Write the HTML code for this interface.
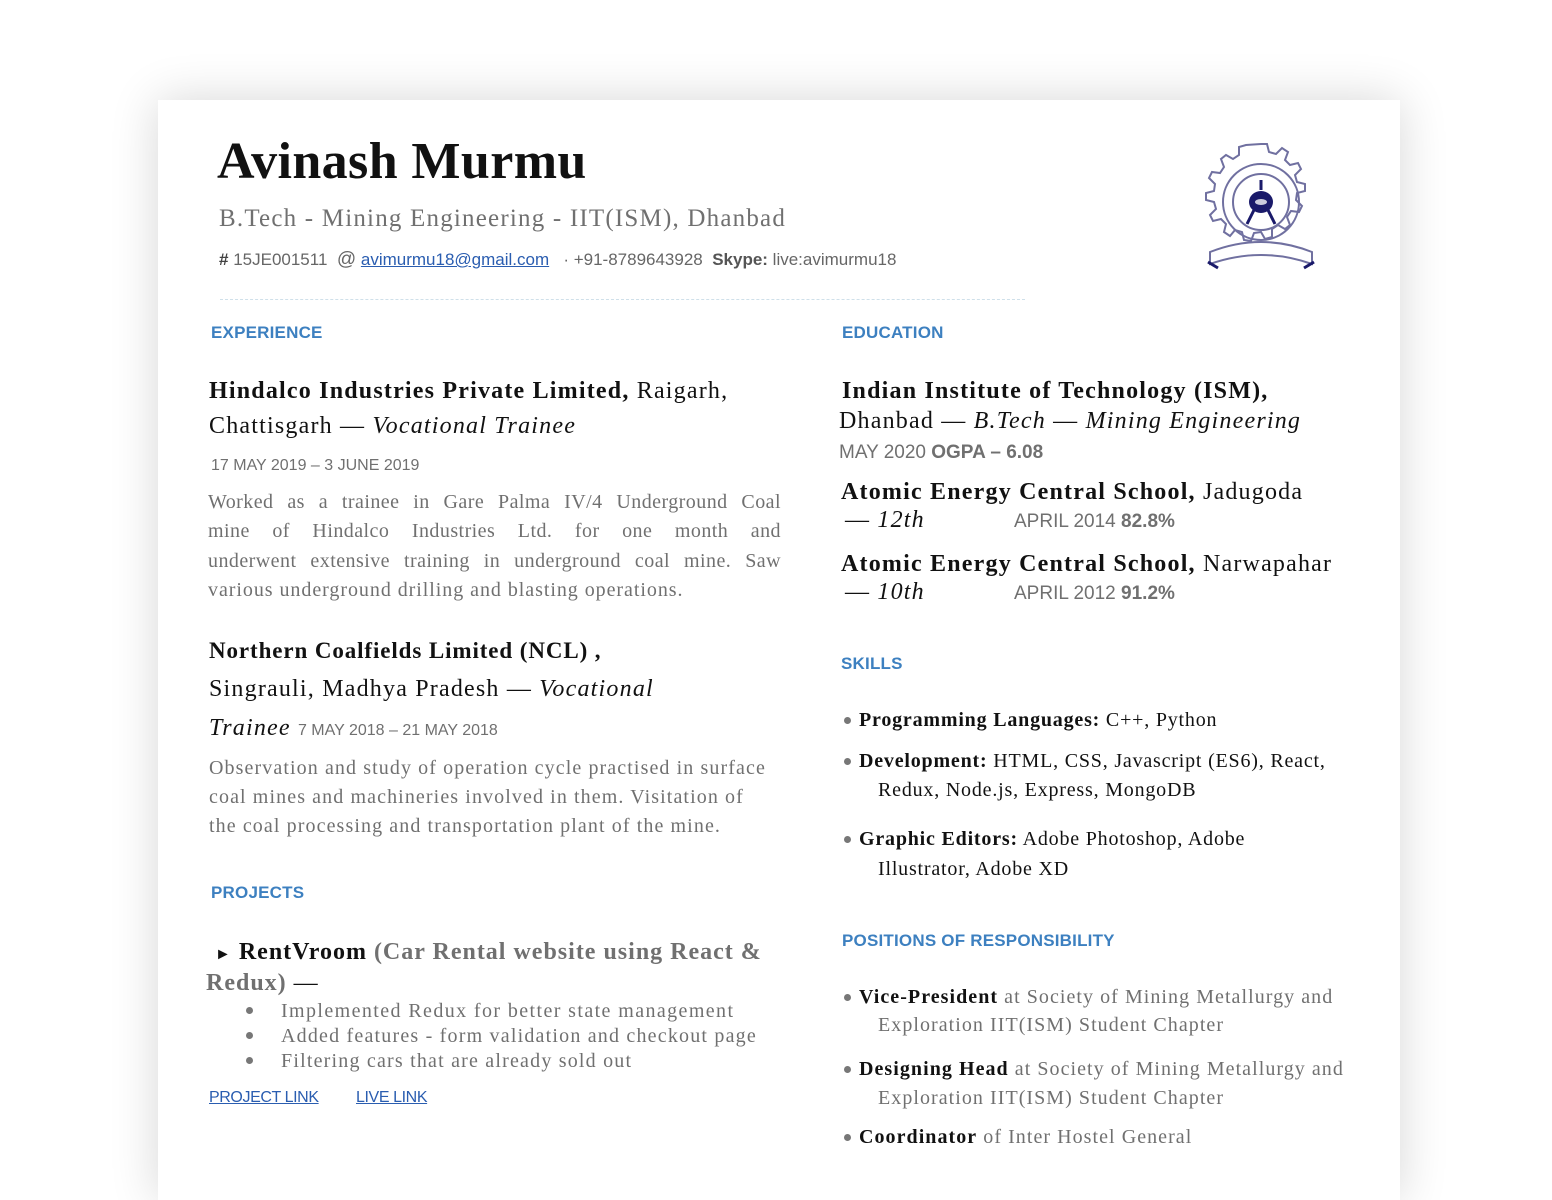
<!DOCTYPE html>
<html><head><meta charset="utf-8">
<style>
html,body{margin:0;padding:0;background:#fff;width:1552px;height:1141px;overflow:hidden;}
.card{position:absolute;left:158px;top:100px;width:1242px;height:1100px;background:#fff;box-shadow:0 0 45px rgba(0,0,0,0.16);}
.t{position:absolute;white-space:nowrap;line-height:1;font-family:"Liberation Serif",serif;}
.s{font-family:"Liberation Sans",sans-serif;}
.h{font-family:"Liberation Sans",sans-serif;color:#3d80c0;font-size:17px;font-weight:bold;letter-spacing:0.2px;}
.b{font-weight:bold;color:#111;}
.g{color:#707070;}
.k{color:#111;}
.p{font-size:20px;color:#707070;letter-spacing:1.1px;}
.j{text-align:justify;text-align-last:justify;width:573px;letter-spacing:0.45px;}
.dot{position:absolute;width:7px;height:7px;border-radius:50%;background:#777;}
.hd{font-size:24px;letter-spacing:1.2px;color:#111;}
.dt{font-family:"Liberation Sans",sans-serif;font-size:16px;color:#707070;letter-spacing:0;}
.r{font-size:20px;letter-spacing:0.8px;}
.q{font-size:20px;letter-spacing:1.05px;}
a{color:#2a5db0;text-decoration:underline;}
</style></head><body>
<div class="card"></div>

<div class="t b" style="left:217px;top:136px;font-size:52px;letter-spacing:0.4px;">Avinash Murmu</div>
<div class="t g" style="left:219px;top:206px;font-size:25px;letter-spacing:1.2px;">B.Tech - Mining Engineering - IIT(ISM), Dhanbad</div>
<div class="t s" style="left:219px;top:250px;font-size:17px;color:#666;"><b style="color:#444">#</b> 15JE001511 &nbsp;<span style="font-size:19px">@</span> <a style="color:#2a5db0">avimurmu18@gmail.com</a> &nbsp; · +91-8789643928 &nbsp;<b style="color:#555">Skype:</b> live:avimurmu18</div>
<div style="position:absolute;left:220px;top:299px;width:805px;border-top:1px dashed #cfe0ea;"></div>

<svg style="position:absolute;left:1200px;top:140px" width="122" height="135" viewBox="0 0 122 135">
<g fill="none" stroke="#7070a0" stroke-width="2">
<path d="M61 4 l6 0 2 8 7 2 6-6 6 4-3 8 5 5 8-2 3 6-6 6 2 7 8 2 0 7-8 2-1 7 6 6-3 6-8-1-4 6 3 8-5 4-7-4-6 4 0 8-7 2-4-7-7 1-3 8-7-1-2-8-7-2-5 6-6-4 2-8-5-5-8 2-3-6 6-6-2-7-8-2 0-7 8-2 1-7-6-6 3-6 8 1 4-6-3-8 5-4 7 4 6-4 0-8 7-2 z"/>
<circle cx="61" cy="62" r="38"/>
<circle cx="61" cy="62" r="28"/>
</g>
<path d="M61 40 v10 M47 84 L58 62 M75 84 L64 62" stroke="#1a1a6a" stroke-width="3"/>
<ellipse cx="61" cy="62" rx="12" ry="11" fill="#1a1a6a"/>
<ellipse cx="61" cy="62" rx="6" ry="3" fill="#ccd"/>
<path d="M10 112 Q61 92 112 112 L112 124 Q61 106 10 124 Z" fill="#fff" stroke="#7070a0" stroke-width="2"/>
<path d="M8 122 l10 6 M114 122 l-10 6" stroke="#1a1a6a" stroke-width="3"/>
</svg>

<!-- LEFT -->
<div class="t h" style="left:211px;top:324px;">EXPERIENCE</div>
<div class="t hd" style="left:209px;top:379px;"><b>Hindalco Industries Private Limited,</b> Raigarh,</div>
<div class="t hd" style="left:209px;top:414px;">Chattisgarh — <i>Vocational Trainee</i></div>
<div class="t dt" style="left:211px;top:458px;">17 MAY 2019 – 3 JUNE 2019</div>
<div class="t p j" style="left:208px;top:492px;">Worked as a trainee in Gare Palma IV/4 Underground Coal</div>
<div class="t p j" style="left:208px;top:521px;">mine of Hindalco Industries Ltd. for one month and</div>
<div class="t p j" style="left:208px;top:551px;">underwent extensive training in underground coal mine. Saw</div>
<div class="t p" style="left:208px;top:580px;letter-spacing:0.95px;">various underground drilling and blasting operations.</div>

<div class="t b" style="left:209px;top:639px;font-size:23px;letter-spacing:0.9px;">Northern Coalfields Limited (NCL) ,</div>
<div class="t hd" style="left:209px;top:677px;">Singrauli, Madhya Pradesh — <i>Vocational</i></div>
<div class="t hd" style="left:209px;top:716px;"><i>Trainee</i> <span class="dt">7 MAY 2018 – 21 MAY 2018</span></div>
<div class="t p" style="left:209px;top:758px;">Observation and study of operation cycle practised in surface</div>
<div class="t p" style="left:209px;top:787px;">coal mines and machineries involved in them. Visitation of</div>
<div class="t p" style="left:209px;top:816px;">the coal processing and transportation plant of the mine.</div>

<div class="t h" style="left:211px;top:884px;">PROJECTS</div>
<div class="t hd" style="left:215px;top:940px;letter-spacing:1.0px;"><span style="font-size:16px">&#9658;</span> <b>RentVroom</b> <b style="color:#707070">(Car Rental website using React &amp;</b></div>
<div class="t hd" style="left:206px;top:971px;letter-spacing:1.0px;"><b style="color:#707070">Redux)</b> —</div>
<div class="dot" style="left:246px;top:1007px"></div>
<div class="dot" style="left:246px;top:1032px"></div>
<div class="dot" style="left:246px;top:1057px"></div>
<div class="t p" style="left:281px;top:1001px;letter-spacing:1.4px;">Implemented Redux for better state management</div>
<div class="t p" style="left:281px;top:1026px;letter-spacing:1.2px;">Added features - form validation and checkout page</div>
<div class="t p" style="left:281px;top:1051px;letter-spacing:1.2px;">Filtering cars that are already sold out</div>
<div class="t s" style="left:209px;top:1090px;font-size:16px;letter-spacing:-0.4px;"><a>PROJECT LINK</a></div>
<div class="t s" style="left:356px;top:1090px;font-size:16px;letter-spacing:-0.4px;"><a>LIVE LINK</a></div>

<!-- RIGHT -->
<div class="t h" style="left:842px;top:324px;">EDUCATION</div>
<div class="t hd" style="left:842px;top:379px;"><b>Indian Institute of Technology (ISM),</b></div>
<div class="t hd" style="left:839px;top:409px;">Dhanbad — <i>B.Tech</i> — <i>Mining Engineering</i></div>
<div class="t s g" style="left:839px;top:443px;font-size:19px;">MAY 2020 <b>OGPA – 6.08</b></div>
<div class="t hd" style="left:841px;top:480px;"><b>Atomic Energy Central School,</b> Jadugoda</div>
<div class="t hd" style="left:845px;top:508px;">— <i>12th</i></div>
<div class="t s g" style="left:1014px;top:512px;font-size:19px;">APRIL 2014 <b>82.8%</b></div>
<div class="t hd" style="left:841px;top:552px;"><b>Atomic Energy Central School,</b> Narwapahar</div>
<div class="t hd" style="left:845px;top:580px;">— <i>10th</i></div>
<div class="t s g" style="left:1014px;top:584px;font-size:19px;">APRIL 2012 <b>91.2%</b></div>

<div class="t h" style="left:841px;top:655px;">SKILLS</div>
<div class="dot" style="left:844px;top:717px"></div>
<div class="t k r" style="left:859px;top:710px;"><b>Programming Languages:</b> C++, Python</div>
<div class="dot" style="left:844px;top:758px"></div>
<div class="t k r" style="left:859px;top:751px;"><b>Development:</b> HTML, CSS, Javascript (ES6), React,</div>
<div class="t k r" style="left:878px;top:780px;">Redux, Node.js, Express, MongoDB</div>
<div class="dot" style="left:844px;top:836px"></div>
<div class="t k r" style="left:859px;top:829px;"><b>Graphic Editors:</b> Adobe Photoshop, Adobe</div>
<div class="t k r" style="left:878px;top:859px;">Illustrator, Adobe XD</div>

<div class="t h" style="left:842px;top:932px;">POSITIONS OF RESPONSIBILITY</div>
<div class="dot" style="left:844px;top:994px"></div>
<div class="t g q" style="left:859px;top:987px;"><b class="k">Vice-President</b> at Society of Mining Metallurgy and</div>
<div class="t g q" style="left:878px;top:1015px;">Exploration IIT(ISM) Student Chapter</div>
<div class="dot" style="left:844px;top:1066px"></div>
<div class="t g q" style="left:859px;top:1059px;"><b class="k">Designing Head</b> at Society of Mining Metallurgy and</div>
<div class="t g q" style="left:878px;top:1088px;">Exploration IIT(ISM) Student Chapter</div>
<div class="dot" style="left:844px;top:1134px"></div>
<div class="t g q" style="left:859px;top:1127px;"><b class="k">Coordinator</b> of Inter Hostel General</div>
</body></html>
